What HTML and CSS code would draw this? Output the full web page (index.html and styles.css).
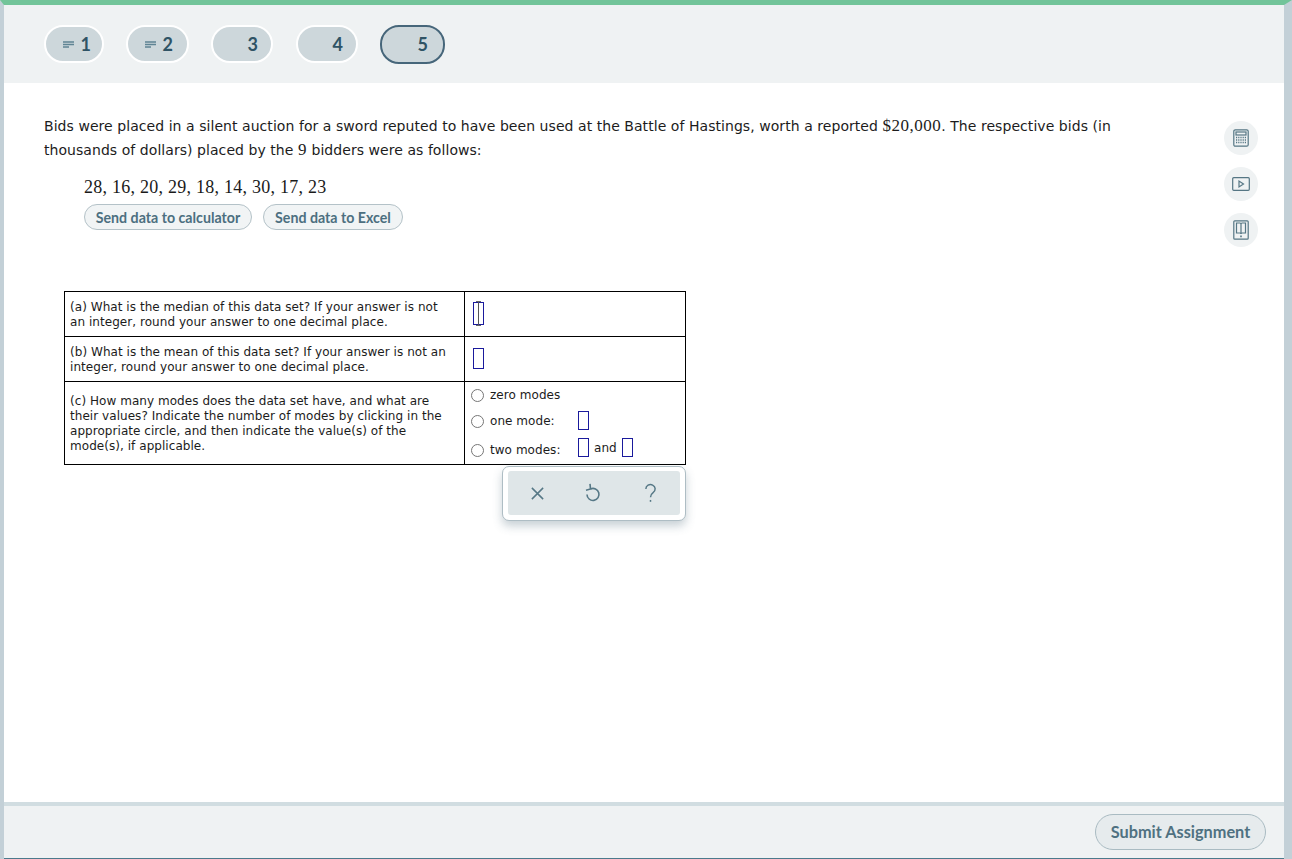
FILE: index.html
```html
<!DOCTYPE html>
<html lang="en">
<head>
<meta charset="utf-8">
<title>Assignment</title>
<link rel="stylesheet" href="styles.css">
</head>
<body>
<div class="frame">
  <header class="nav">
    <button class="pill pill-1"><svg class="flag" viewBox="0 0 11 7"><path d="M0 1h11M0 3.500h11M0 6h6"/></svg><span>1</span></button>
    <button class="pill pill-2"><svg class="flag" viewBox="0 0 11 7"><path d="M0 1h11M0 3.500h11M0 6h6"/></svg><span>2</span></button>
    <button class="pill pill-3"><span>3</span></button>
    <button class="pill pill-4"><span>4</span></button>
    <button class="pill pill-5 current"><span>5</span></button>
  </header>
  <div class="body">
    <main class="question">
      <p class="prompt">Bids were placed in a silent auction for a sword reputed to have been used at the Battle of Hastings, worth a reported <span class="math">$20,000</span>. The respective bids (in thousands of dollars) placed by the <span class="math">9</span> bidders were as follows:</p>
      <div class="data">28, 16, 20, 29, 18, 14, 30, 17, 23</div>
      <div class="send">
        <button class="send-btn send-calc">Send data to calculator</button>
        <button class="send-btn send-excel">Send data to Excel</button>
      </div>
      <div class="answer-wrap">
        <table class="answers">
          <tr class="row-a">
            <td class="q">(a) What is the median of this data set? If your answer is not an integer, round your answer to one decimal place.</td>
            <td class="a"><span class="box box-big focused"></span></td>
          </tr>
          <tr class="row-b">
            <td class="q">(b) What is the mean of this data set? If your answer is not an integer, round your answer to one decimal place.</td>
            <td class="a"><span class="box box-big"></span></td>
          </tr>
          <tr class="row-c">
            <td class="q">(c) How many modes does the data set have, and what are their values? Indicate the number of modes by clicking in the appropriate circle, and then indicate the value(s) of the mode(s), if applicable.</td>
            <td class="a modes">
              <div class="mode mode-0"><span class="radio"></span><span class="mode-label">zero modes</span></div>
              <div class="mode mode-1"><span class="radio"></span><span class="mode-label">one mode:</span><span class="box"></span></div>
              <div class="mode mode-2"><span class="radio"></span><span class="mode-label">two modes:</span><span class="box"></span><span class="and">and</span><span class="box"></span></div>
            </td>
          </tr>
        </table>
        <div class="popup">
          <div class="popup-inner">
            <svg class="pop-icon" viewBox="0 0 16 16"><path d="M2 2l12 12M14 2L2 14"/></svg>
            <svg class="pop-icon undo" viewBox="0 0 16 20"><path d="M5.500 6a6 6 0 1 1-3.500 5.500"/><path d="M5 .8L5.500 6 1 7.200"/></svg>
            <svg class="pop-icon help" viewBox="0 0 14 21"><path d="M2 6.200a5 4.700 0 1 1 7.800 3.800C8 11.300 7 12.300 7 15"/><path d="M7 18v2"/></svg>
          </div>
        </div>
      </div>
    </main>
    <aside class="tools">
      <div class="tool"><svg class="t-calc" viewBox="0 0 16 18"><rect x=".8" y=".8" width="14.400" height="16.400" rx="1.500"/><rect x="3" y="3" width="10" height="3"/><path class="dots" d="M3 8.500h10M3 11h10M3 13.500h10"/></svg></div>
      <div class="tool"><svg class="t-video" viewBox="0 0 18 14"><rect x=".7" y=".7" width="16.600" height="12.600" rx="1"/><path d="M7 4v6l4.500-3z"/></svg></div>
      <div class="tool"><svg class="t-book" viewBox="0 0 16 20"><rect x=".8" y=".8" width="14.400" height="18.400" rx="1"/><path d="M3.500 3h3.500c.6 0 1 .4 1 1 0-.6.4-1 1-1h3.500v10H9c-.6 0-1 .4-1 1 0-.6-.4-1-1-1H3.500zM8 4v10"/><path class="dot" d="M7.200 16.400h1.600"/></svg></div>
    </aside>
  </div>
  <footer class="foot">
    <button class="submit">Submit Assignment</button>
  </footer>
</div>
</body>
</html>
```
FILE: styles.css
```css
* { box-sizing: border-box; }
html, body { margin: 0; padding: 0; height: 100%; background: #fff; overflow: hidden; }
.frame {
  width: 1292px; height: 859px;
  display: flex; flex-direction: column;
  border-top: 5px solid #72c499;
  border-left: 4px solid #c3d0d7;
  border-right: 8px solid #c3d0d7;
  font-family: "DejaVu Sans", Verdana, sans-serif;
  color: #1a1a1a;
}
button { font-family: Lato, "Open Sans", sans-serif; cursor: pointer; }

.nav {
  height: 78px; flex: none;
  background: #eff2f3;
  display: flex; align-items: center;
  padding: 0 0 0 40px;
}
.pill {
  height: 38px; border-radius: 19px;
  border: 2px solid #fff;
  background: #cdd7db;
  display: flex; align-items: center; justify-content: flex-end;
  padding: 0 13px 0 0;
  font-size: 18px; font-weight: 700; color: #2f5365;
}
.pill-1 { width: 60px; margin-right: 22px; padding-right: 11px; }
.pill-2 { width: 63px; margin-right: 22px; padding-right: 14px; }
.pill-3 { width: 62px; margin-right: 23px; padding-right: 13px; }
.pill-4 { width: 62px; margin-right: 22px; padding-right: 13px; }
.pill-5 { width: 65px; padding-right: 15px; }
.pill.current { height: 39px; border: 2px solid #46667a; }
.flag { width: 11px; height: 7px; margin-right: 7px; fill: none; stroke: #5f8494; stroke-width: 1.300; }

.body { flex: 1; display: flex; min-height: 0; }
.question { flex: 1; padding: 31px 0 0 40px; min-width: 0; position: relative; }
.prompt {
  margin: 0; width: 1075px;
  font-size: 14px; line-height: 24px; color: #1c1c1c;
  letter-spacing: .055px;
}
.math { font-family: "Liberation Serif", "Times New Roman", serif; font-size: 17px; letter-spacing: .5px; line-height: 1; }
.data {
  margin: 13px 0 0 40px;
  font-family: "Liberation Serif", "Times New Roman", serif;
  font-size: 18px; line-height: 24px; color: #1a1a1a;
  letter-spacing: .25px;
}
.send { display: flex; gap: 11px; margin: 5px 0 0 40px; }
.send-btn {
  height: 26px; padding: 0;
  border: 1px solid #b4c2c8; border-radius: 13px;
  background: #f1f4f5;
  font-size: 14.200px; font-weight: 700; color: #4c6f80;
}
.send-calc { width: 168px; }
.send-excel { width: 140px; }
.answer-wrap { position: relative; margin: 61px 0 0 20px; width: 622px; }
.answers {
  width: 622px; border-collapse: collapse; table-layout: fixed;
  font-size: 12px; line-height: 15px; color: #1c1c1c;
  letter-spacing: .05px;
}
.answers td { border: 1px solid #000; padding: 1px 10px 0 5px; vertical-align: middle; }
.q { width: 400px; }
.row-a, .row-b { height: 45px; }
.row-c { height: 83px; }
.answers td.a { position: relative; padding: 0 0 2px 8px; }
.box {
  display: inline-block; width: 11px; height: 19px;
  border: 1px solid #1a1a9c; background: #fff; vertical-align: middle;
}
.box-big { height: 21px; display: block; }
.box.focused { position: relative; height: 23px; }
.box.focused::before {
  content: ""; position: absolute; left: 4px; top: -2px; bottom: -2px; width: 1px;
  background: #555;
}
.box.focused::after {
  content: ""; position: absolute; left: 2px; top: -2px; bottom: -2px; width: 5px;
  border-top: 1px solid #666; border-bottom: 1px solid #666;
}
.answers td.modes { padding: 0; }
.mode { display: flex; align-items: flex-start; position: absolute; left: 6px; line-height: 15px; }
.mode-0 { top: 6px; }
.mode-1 { top: 31px; }
.mode-2 { top: 60px; }
.radio {
  width: 13px; height: 13px; border-radius: 50%;
  border: 1px solid #767676; background: #fff; margin: 1px 6px 0 0; flex: none;
}
.mode-1 .radio, .mode-2 .radio { margin-top: 2px; }
.mode-0 .mode-label { margin-top: 0; }
.mode-1 .mode-label, .mode-2 .mode-label { width: 88px; margin-top: 1px; }
.mode-1 .box { margin-top: -2px; }
.mode-2 .box { margin-top: -4px; }
.and { margin: -1px 5px 0; }

.popup {
  position: absolute; left: 438px; top: 175px;
  width: 184px; height: 55px;
  background: #fff; border: 1px solid #aebdc4; border-radius: 7px;
  padding: 4px 5px 5px;
  box-shadow: 0 5px 10px rgba(70, 100, 115, .3);
}
.popup-inner {
  height: 44px; background: #dfe6e8; border-radius: 3px;
  display: flex; align-items: center; justify-content: space-between;
  padding: 0 23px 0 22px;
}
.pop-icon { width: 15px; height: 15px; fill: none; stroke: #567886; stroke-width: 1.600; }
.pop-icon.undo { width: 16px; height: 20px; margin-right: 3px; }
.pop-icon.help { width: 13px; height: 20px; }

.tools { width: 72px; flex: none; padding-top: 38px; display: flex; flex-direction: column; gap: 12px; align-items: flex-start; }
.tool {
  width: 34px; height: 34px; border-radius: 50%; background: #eff2f3;
  display: flex; align-items: center; justify-content: center;
  margin-left: 12px;
}
.tool svg { fill: none; stroke: #557684; stroke-width: 1.200; }
.t-calc { width: 16px; height: 18px; }
.t-video { width: 18px; height: 14px; }
.t-book { width: 16px; height: 20px; }
.tool .dots { stroke-dasharray: 1.200 1; stroke-width: 1.400; }
.tool .dot { stroke-width: 1.600; }

.foot {
  height: 57px; flex: none;
  background: #eff2f3;
  border-top: 4px solid #d1dde1;
  border-bottom: 1px solid #4c7a8c;
  display: flex; align-items: center; justify-content: flex-end;
  padding-right: 18px;
}
.submit {
  width: 171px; height: 36px; border-radius: 18px;
  border: 1px solid #a9bbc2; background: #e6ebed;
  font-size: 16.300px; font-weight: 700; color: #4f7181;
  padding: 0 0 1px;
}
```
